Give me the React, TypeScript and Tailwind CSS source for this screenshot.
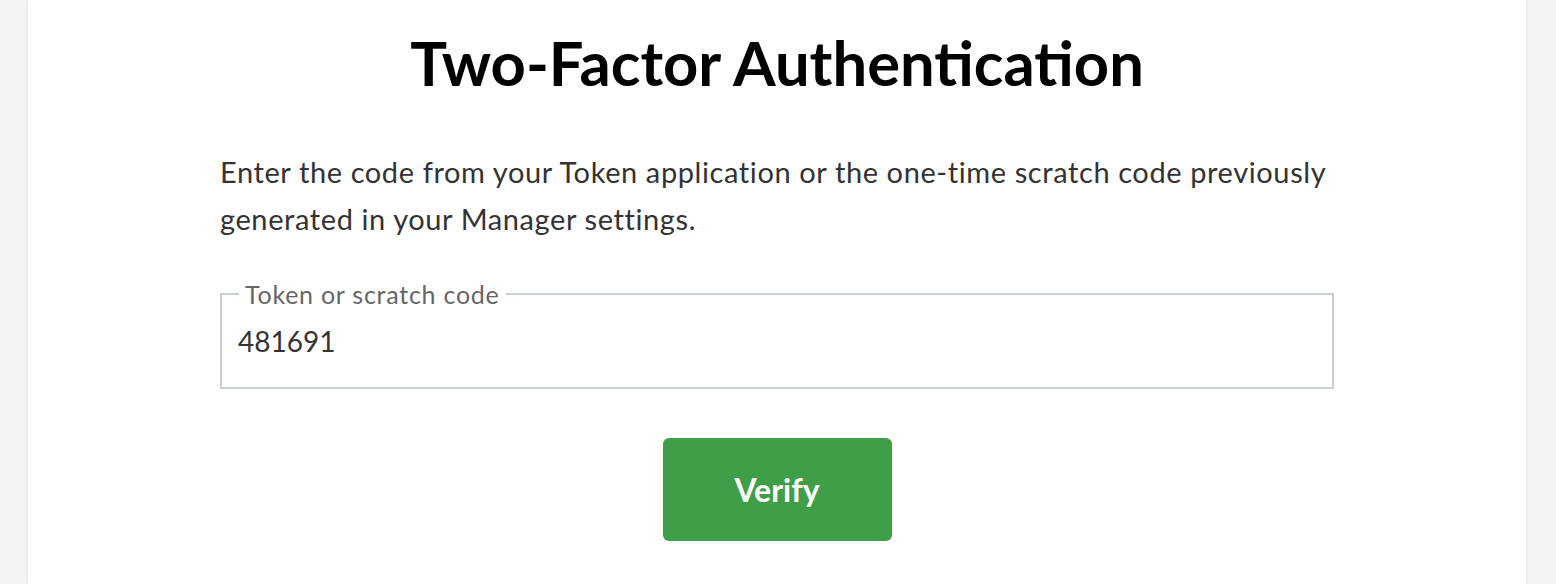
import React, { useState } from "react";

function App() {
  const [code, setCode] = useState<string>("481691");

  return (
    <div className="min-h-screen bg-[#f3f3f3] pl-[28px] pr-[30px] font-['Lato',sans-serif]">
      <div className="min-h-[584px] bg-white shadow-[0_0_4px_rgba(0,0,0,0.08)]">
        <div className="mx-auto w-[1114px] pt-[20px]">
          <h1 className="text-center text-[61.5px] font-bold leading-[84px] text-black">
            Two-Factor Authentication
          </h1>
          <p className="mt-[44px] text-[29px] leading-[47px] tracking-[0.6px] text-[#333]">
            Enter the code from your Token application or the one-time scratch code previously
            generated in your Manager settings.
          </p>
          <fieldset className="mt-[38px] h-[109px] border-2 border-[#c9d0d5] pl-[17px] pr-[15px]">
            <legend className="px-[6px] text-[25px] leading-[28px] tracking-[0.75px] text-[#666]">
              Token or scratch code
            </legend>
            <input
              value={code}
              onChange={(e) => setCode(e.target.value)}
              className="-ml-[1px] mt-[13px] w-full bg-transparent text-[28px] leading-[40px] text-[#333] outline-none"
            />
          </fieldset>
          <div className="mt-[49px] flex justify-center">
            <button className="h-[103px] w-[229px] rounded-[6px] bg-[#3f9e48] text-[32px] font-bold text-white">
              Verify
            </button>
          </div>
        </div>
      </div>
    </div>
  );
}

export default App;
